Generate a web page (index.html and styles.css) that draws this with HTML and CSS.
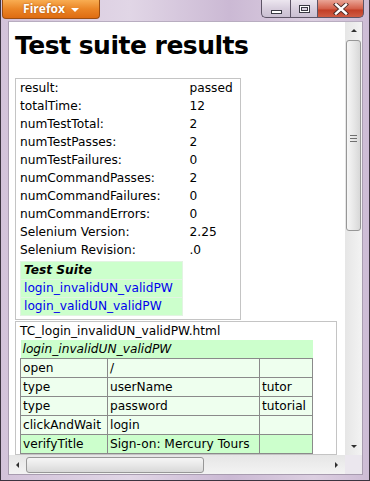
FILE: index.html
```html
<!DOCTYPE html>
<html lang="en">
  <head>
    <meta charset="UTF-8" />
    <title>Test suite results</title>
    <link rel="stylesheet" href="styles.css">
  </head>
  <body>
    <div class="window">
      <div class="titlebar">
        <div class="ff-button">Firefox <span class="caret"></span></div>
        <div class="controls">
          <div class="ctl min"><span class="min-glyph"></span></div>
          <div class="ctl max"><span class="max-glyph"></span></div>
          <div class="ctl close">
            <svg width="16" height="12" viewBox="0 0 16 12">
              <path d="M3 1.5 L13 10.5 M13 1.5 L3 10.5" stroke="#4a2a26" stroke-width="4.2" stroke-linecap="square" fill="none"/>
              <path d="M3 1.5 L13 10.5 M13 1.5 L3 10.5" stroke="#ffffff" stroke-width="2.4" stroke-linecap="square" fill="none"/>
            </svg>
          </div>
        </div>
      </div>

      <div class="client">
        <div class="viewport">
          <div class="page">
            <h1>Test suite results</h1>

            <table class="summary">
              <colgroup><col class="c-label"><col class="c-value"></colgroup>
              <tr><td>result:</td><td>passed</td></tr>
              <tr><td>totalTime:</td><td>12</td></tr>
              <tr><td>numTestTotal:</td><td>2</td></tr>
              <tr><td>numTestPasses:</td><td>2</td></tr>
              <tr><td>numTestFailures:</td><td>0</td></tr>
              <tr><td>numCommandPasses:</td><td>2</td></tr>
              <tr><td>numCommandFailures:</td><td>0</td></tr>
              <tr><td>numCommandErrors:</td><td>0</td></tr>
              <tr><td>Selenium Version:</td><td>2.25</td></tr>
              <tr><td>Selenium Revision:</td><td>.0</td></tr>
              <tr>
                <td class="suite-cell">
                  <table class="suite">
                    <tr><td class="suite-title">Test Suite</td></tr>
                    <tr><td><a href="#tc1">login_invalidUN_validPW</a></td></tr>
                    <tr><td><a href="#tc2">login_validUN_validPW</a></td></tr>
                  </table>
                </td>
                <td></td>
              </tr>
            </table>

            <table class="testcase">
              <tr><td class="tc-name">TC_login_invalidUN_validPW.html</td></tr>
              <tr>
                <td class="tc-body">
                  <table class="commands">
                    <colgroup><col class="c-cmd"><col class="c-target"><col class="c-val"></colgroup>
                    <tr class="title-row"><td colspan="3">login_invalidUN_validPW</td></tr>
                    <tr class="done"><td>open</td><td>/</td><td></td></tr>
                    <tr class="done"><td>type</td><td>userName</td><td>tutor</td></tr>
                    <tr class="done"><td>type</td><td>password</td><td>tutorial</td></tr>
                    <tr class="done"><td>clickAndWait</td><td>login</td><td></td></tr>
                    <tr class="passed"><td>verifyTitle</td><td>Sign-on: Mercury Tours</td><td></td></tr>
                  </table>
                </td>
              </tr>
            </table>
          </div>
        </div>

        <div class="vscroll">
          <div class="arrow"><span class="tri up"></span></div>
          <div class="vthumb"><span class="grip"></span></div>
          <div class="track"></div>
          <div class="arrow"><span class="tri down"></span></div>
        </div>

        <div class="hscroll">
          <div class="arrow"><span class="tri left"></span></div>
          <div class="hthumb"></div>
          <div class="track"></div>
          <div class="arrow"><span class="tri right"></span></div>
        </div>

        <div class="corner"></div>
      </div>
    </div>
  </body>
</html>
```

FILE: styles.css
```css
body {
  margin: 0;
  background: #ffffff;
}

.window {
  width: 370px;
  height: 481px;
  box-sizing: border-box;
  display: flex;
  flex-direction: column;
  padding: 0 6px 5px 7px;
  border: 1px solid #3c3440;
  border-top: none;
  background: linear-gradient(to right, #d3c3da 0%, #e1d6e6 35%, #cbb9d4 62%, #dccfe1 85%, #cdbcd5 100%);
}

/* title bar */

.titlebar {
  height: 21px;
  flex: none;
  display: flex;
  justify-content: space-between;
  align-items: flex-start;
}

.ff-button {
  flex: none;
  width: 96px;
  height: 18px;
  margin-left: -6px;
  border: 1px solid #9c4e12;
  border-top: none;
  border-radius: 0 0 4px 4px;
  background: linear-gradient(#f8ad52, #eb8526 50%, #de6c12);
  color: #ffffff;
  font-family: "Open Sans", "DejaVu Sans", sans-serif;
  font-weight: bold;
  font-size: 12px;
  line-height: 18px;
  text-shadow: 0 0 2px #a04a0a;
  display: flex;
  justify-content: center;
  align-items: center;
  gap: 6px;
}

.caret {
  width: 0;
  height: 0;
  border-left: 4px solid transparent;
  border-right: 4px solid transparent;
  border-top: 4px solid #ffffff;
  margin-top: 1px;
}

.controls {
  flex: none;
  display: flex;
  margin-right: -1px;
}

.ctl {
  height: 18px;
  box-sizing: border-box;
  border: 1px solid #5d5466;
  border-top: none;
  display: flex;
  align-items: center;
  justify-content: center;
}

.min {
  width: 29px;
  border-right: none;
  border-radius: 0 0 0 5px;
  background: linear-gradient(#ece6ef, #d6ccdc 55%, #cabfd2);
}

.max {
  width: 27px;
  border-right: none;
  background: linear-gradient(#ece6ef, #d6ccdc 55%, #cabfd2);
}

.close {
  width: 47px;
  border-radius: 0 0 5px 0;
  background: linear-gradient(#eaa596, #d4624c 50%, #c23f27 60%, #cf5c44);
}

.min-glyph {
  width: 9px;
  height: 2px;
  margin-top: 6px;
  border: 1px solid #3a3a44;
  background: #ffffff;
}

.max-glyph {
  width: 9px;
  height: 6px;
  border: 1px solid #3a3a44;
  background: #ffffff;
  display: flex;
  align-items: center;
  justify-content: center;
}

.max-glyph::after {
  content: "";
  width: 5px;
  height: 2px;
  border: 1px solid #3a3a44;
  background: #dcd4e2;
}

/* client area */

.client {
  flex: 1;
  min-height: 0;
  display: grid;
  grid-template-columns: 1fr 17px;
  grid-template-rows: 1fr 19px;
  border: 1px solid #a89cb0;
  border-top-color: #b8adc0;
  background: #ffffff;
}

.viewport {
  overflow: hidden;
  background: #ffffff;
}

.page {
  padding: 0 6px;
  font-family: "DejaVu Sans", Verdana, sans-serif;
  font-size: 12.2px;
  color: #000000;
}

h1 {
  margin: 9px 0 17px;
  font-size: 25px;
  line-height: 30px;
  letter-spacing: -0.5px;
  font-weight: bold;
}

/* summary table */

.summary {
  width: 226px;
  table-layout: fixed;
  border-collapse: collapse;
  border: 1px solid #c4c4c4;
}

.c-label {
  width: 172px;
}

.summary td {
  padding: 0 2px 0 4px;
  height: 18px;
  line-height: 18px;
  vertical-align: middle;
  white-space: nowrap;
}

.summary td + td {
  padding-left: 2px;
}

.summary td.suite-cell {
  padding: 2px 4px 3px 4px;
}

.suite {
  width: 163px;
  border-collapse: collapse;
}

.suite td {
  height: 17px;
  line-height: 17px;
  padding: 0 3px;
  background: #ccffcc;
  border: 1px solid #e2f4e2;
}

.suite-title {
  font-weight: bold;
  font-style: italic;
}

.suite a {
  color: #0000ee;
  text-decoration: none;
}

/* test case table */

.testcase {
  width: 322px;
  margin-top: 1px;
  border-collapse: collapse;
  border: 1px solid #c4c4c4;
}

.tc-name {
  padding: 0 4px;
  height: 18px;
  line-height: 18px;
  white-space: nowrap;
}

.tc-body {
  padding: 0 4px;
}

.commands {
  width: 293px;
  table-layout: fixed;
  border-collapse: collapse;
}

.c-cmd {
  width: 87px;
}

.c-target {
  width: 152px;
}

.commands td {
  height: 18px;
  line-height: 18px;
  padding: 0 2px;
  border: 1px solid #8a8a8a;
  white-space: nowrap;
  overflow: hidden;
}

.commands .title-row td {
  border: none;
  font-style: italic;
  background: #ccffcc;
}

.commands .done td {
  background: #eeffee;
}

.commands .passed td {
  background: #ccffcc;
}

/* scrollbars */

.vscroll,
.hscroll {
  display: flex;
  background: linear-gradient(to right, #e6e6e6, #f3f3f3);
}

.vscroll {
  flex-direction: column;
}

.hscroll {
  background: linear-gradient(#e6e6e6, #f3f3f3);
}

.arrow {
  flex: none;
  width: 17px;
  height: 17px;
  display: flex;
  align-items: center;
  justify-content: center;
}

.hscroll .arrow {
  height: 19px;
}

.track {
  flex: 1;
}

.tri {
  width: 0;
  height: 0;
}

.tri.up {
  border-left: 3px solid transparent;
  border-right: 3px solid transparent;
  border-bottom: 3px solid #303030;
}

.tri.down {
  border-left: 3px solid transparent;
  border-right: 3px solid transparent;
  border-top: 3px solid #303030;
}

.tri.left {
  border-top: 3px solid transparent;
  border-bottom: 3px solid transparent;
  border-right: 3px solid #303030;
}

.tri.right {
  border-top: 3px solid transparent;
  border-bottom: 3px solid transparent;
  border-left: 3px solid #303030;
}

.vthumb {
  flex: none;
  height: 191px;
  margin: 1px 1px 0 1px;
  box-sizing: border-box;
  border: 1px solid #979797;
  border-radius: 3px;
  background: linear-gradient(to right, #f6f6f6, #e8e8e8 50%, #d8d8d8);
  display: flex;
  align-items: flex-end;
  justify-content: center;
  padding-bottom: 88px;
}

.vthumb .grip {
  width: 7px;
  height: 5px;
  border-top: 1px solid #707070;
  border-bottom: 1px solid #707070;
  background: linear-gradient(transparent 2px, #707070 2px, #707070 3px, transparent 3px);
}

.hthumb {
  flex: none;
  width: 178px;
  margin: 2px 0 1px 0;
  box-sizing: border-box;
  border: 1px solid #979797;
  border-radius: 3px;
  background: linear-gradient(#f6f6f6, #e8e8e8 50%, #d8d8d8);
}

.corner {
  background: #ebe7ee;
}
```
